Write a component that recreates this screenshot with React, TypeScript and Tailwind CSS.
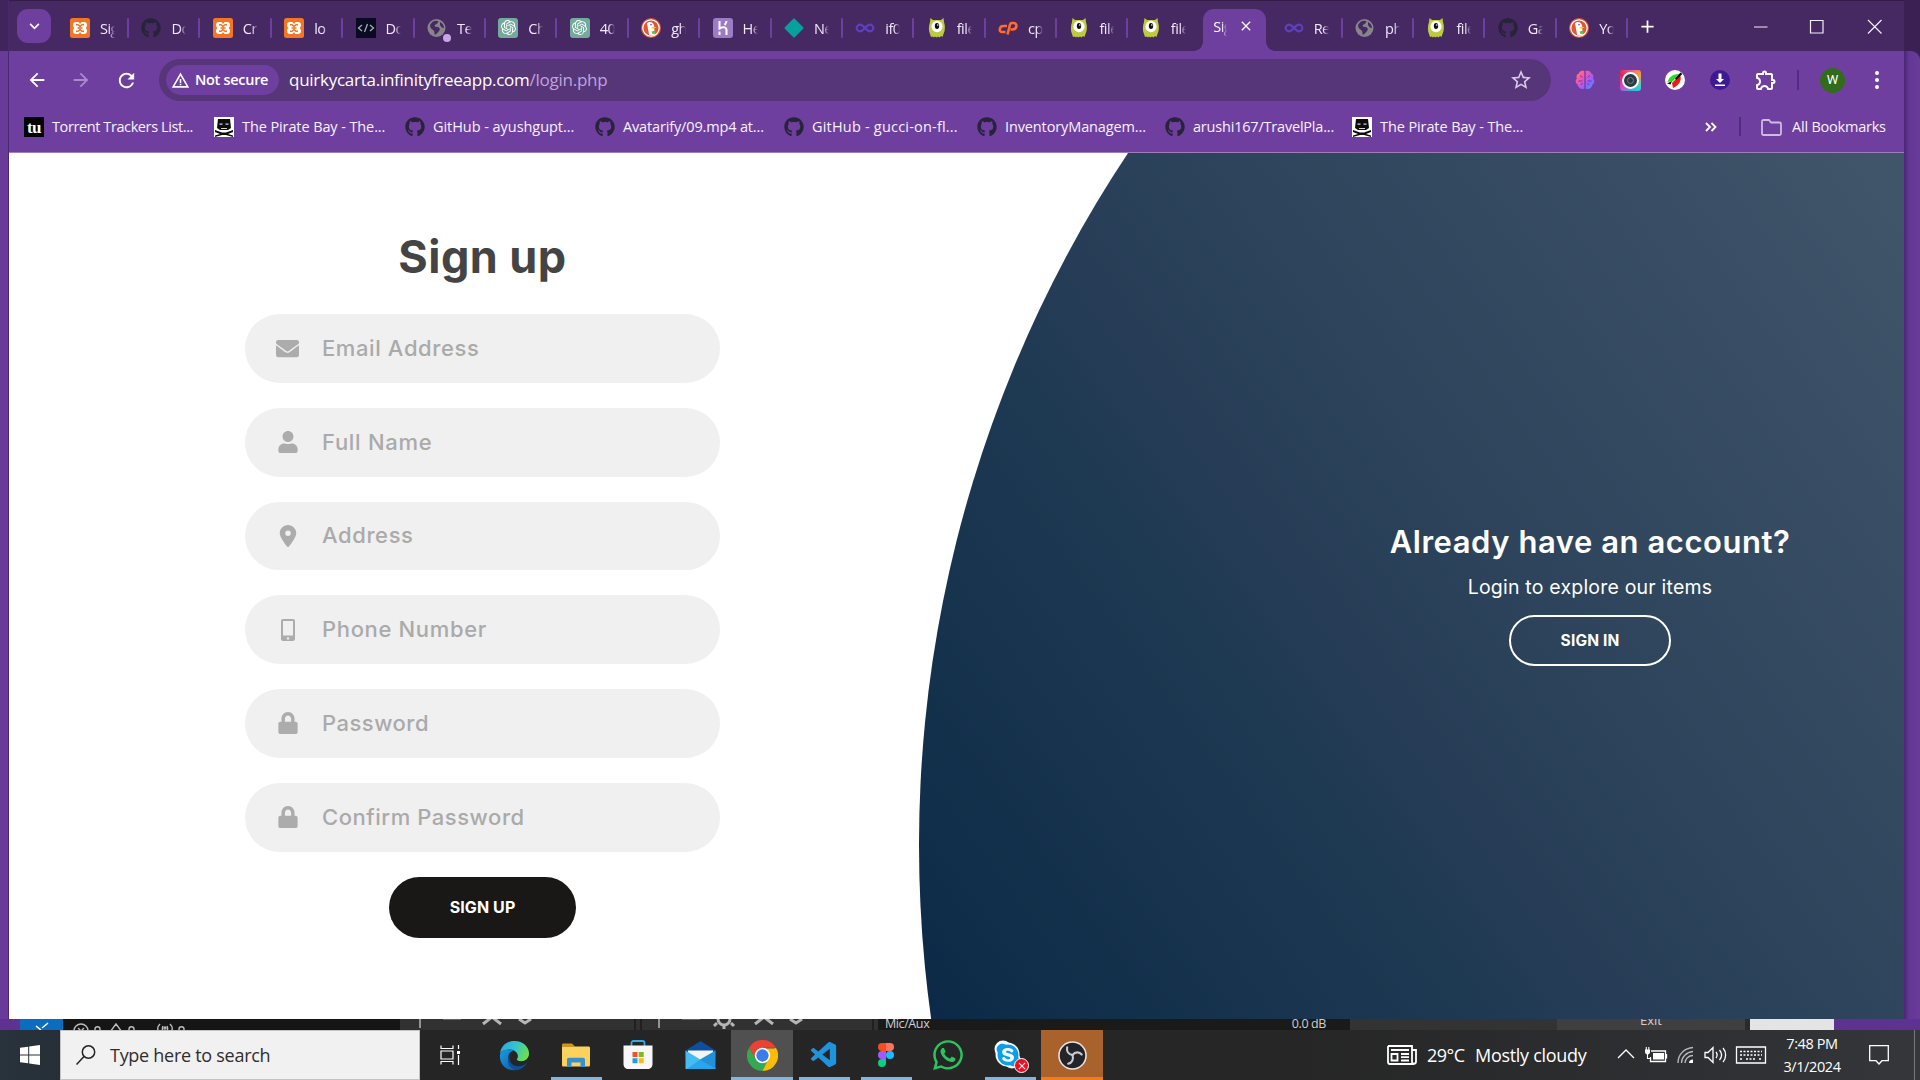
import type { ReactNode } from "react";
import { FaGithub, FaEnvelope, FaUser, FaLock, FaWhatsapp, FaSkype } from "react-icons/fa";
import { FaLocationDot } from "react-icons/fa6";
import { SiOpenai } from "react-icons/si";
import { VscVscode } from "react-icons/vsc";
import {
  MdArrowBack,
  MdArrowForward,
  MdRefresh,
  MdStarBorder,
  MdOutlineExtension,
  MdWarningAmber,
  MdAdd,
  MdClose,
} from "react-icons/md";
import { Infinity as InfinityIcon } from "lucide-react";

/* ---------- favicons ---------- */

const Xampp = () => (
  <svg viewBox="0 0 20 20" className="size-5">
    <rect width="20" height="20" rx="2.500" fill="#f37623" />
    <path
      d="M6 4h2.500L10 6l1.500-2H14c2 0 3 1.200 3 3 0 1.300-.6 2.200-1.500 3 .9.800 1.500 1.700 1.500 3 0 1.800-1 3-3 3h-2.500L10 14l-1.500 2H6c-2 0-3-1.200-3-3 0-1.300.6-2.200 1.500-3C3.600 9.200 3 8.300 3 7c0-1.800 1-3 3-3z"
      fill="#fff"
    />
    <path
      d="M6 6.800h2l2 1.700 2-1.700h2M6 13.200h2l2-1.700 2 1.700h2M7.500 10h5"
      fill="none"
      stroke="#f37623"
      strokeWidth="1.500"
    />
  </svg>
);
const Github = () => <FaGithub size={20} className="shrink-0 text-[#272338]" />;
const Code = () => (
  <span className="flex size-5 items-center justify-center bg-[#0a0b22]">
    <svg viewBox="0 0 18 10" className="h-[10px] w-[18px]" fill="none" stroke="#9fb0b0" strokeWidth="1.300">
      <path d="M5 2L1.500 5 5 8M13 2l3.500 3L13 8M10.500 1L7.500 9" />
    </svg>
  </span>
);
const Globe = ({ dot = false }: { dot?: boolean }) => (
  <span className="relative flex size-5 items-center justify-center">
    <svg viewBox="0 0 20 20" className="size-5">
      <circle cx="9.5" cy="10" r="9" fill="#86868a" />
      <path
        d="M3 7c2-4 5-5 8-4 1 1-1 3-3 4-1 1 0 2 2 2s4 2 2 4c-1 1-2 3-4 4-1-2 0-4-2-5S3 9 3 7zM13 4c2 1 4 3 4 6-2 0-3-1-4-3z"
        fill="#462863"
      />
    </svg>
    {dot && <span className="absolute -right-1 -bottom-1 size-2 rounded-full bg-[#c9a5e6]" />}
  </span>
);
const Gpt = () => (
  <span className="flex size-5 items-center justify-center rounded-[3px] bg-[#74aa9c] text-white">
    <SiOpenai size={15} />
  </span>
);
const Duck = () => (
  <svg viewBox="0 0 20 20" className="size-5">
    <circle cx="10" cy="10" r="10" fill="#de5833" />
    <circle cx="10" cy="10" r="8.200" fill="#de5833" stroke="#fff" strokeWidth="1.200" />
    <path d="M6 5.200c2.400-2.400 6.800-.8 7 2.600l.8 8.600c-1.800 1-4 1-5.700.3z" fill="#fff" />
    <path d="M10.500 9.200c2-.8 4-.6 5 0-1 1-3 1-4.800 1.600z" fill="#fdd20a" />
    <path d="M10.500 13.500l4-1v3l-3 .5z" fill="#65bc46" />
    <circle cx="10" cy="6.800" r=".8" fill="#2d4f8e" />
  </svg>
);
const Heroku = () => (
  <span className="flex size-5 items-center justify-center rounded-[3px] bg-[#9c7cc4] text-white">
    <svg viewBox="0 0 20 20" className="size-5" fill="none" stroke="#fff" strokeWidth="2">
      <path d="M6.500 3v7.500c4-2 7-1.500 7 1.500V17M13.500 3c0 1.700-.8 2.800-1.800 4M6.500 13.500V17" />
    </svg>
  </span>
);
const Diamond = () => (
  <span className="flex size-5 items-center justify-center">
    <span className="size-[14px] rotate-45 rounded-[1px] bg-[#06a19b]" />
  </span>
);
const Loop = () => <InfinityIcon size={20} strokeWidth={2.6} className="text-[#5e3fc0]" />;
const Monster = () => (
  <svg viewBox="0 0 20 20" className="size-5">
    <path
      d="M3.500 0l2.500 2h8l2.500-2 .5 4c1.500 4 1 9-.5 12l-1 3-1.500-1-1.500 1.500-1.500-1-1.500 1-1.500-1L7 19.500 5.500 18.500 4 19l-1-3c-1.500-3-1.500-8 0-12z"
      fill="#bccb3f"
    />
    <ellipse cx="10" cy="8.500" rx="5.600" ry="5.800" fill="#fff" />
    <ellipse cx="10" cy="8" rx="2.200" ry="3" fill="#111" />
    <circle cx="10.800" cy="7" r=".8" fill="#fff" />
  </svg>
);
const Cpanel = () => (
  <svg viewBox="0 0 20 20" className="size-5" fill="none" stroke="#ff6c2c" strokeWidth="2.600">
    <path d="M9 8H5.500C3.500 8 2 9.500 1.800 11.300 1.600 13 2.500 14 4 14h3.500" />
    <path d="M9.500 16.500L12 6.500c.3-1 .8-1.500 1.800-1.500h1.700c2 0 3.200 1.500 2.900 3.300-.3 2-1.900 3.200-3.900 3.200h-2" />
  </svg>
);

const Pirate = () => (
  <svg viewBox="0 0 20 20" className="size-5 shrink-0">
    <rect width="20" height="20" fill="#fff" />
    <path d="M4 2h12l1 9-3 2H6l-3-2z" fill="#0c0c0c" />
    <path
      d="M1 13l7 2.500h4L19 13v2l-5 2 5 1.500V20l-7-2H8l-7 2v-1.500L6 17l-5-2z"
      fill="#0c0c0c"
    />
    <path d="M5.500 6.500h3v1.200h-3zM11.500 6.500h3v1.200h-3zM7 11h6v1H7z" fill="#d5d5d5" />
  </svg>
);
const Tu = () => (
  <span className="flex size-5 shrink-0 items-center justify-center bg-black font-['Liberation_Serif',serif] text-[17px] leading-none font-bold tracking-[-0.5px] text-white">
    tu
  </span>
);

/* ---------- tab strip ---------- */

type TabItem = { title: string; icon: ReactNode };

const leftTabs: TabItem[] = [
  { title: "Sig", icon: <Xampp /> },
  { title: "Do", icon: <Github /> },
  { title: "Cr", icon: <Xampp /> },
  { title: "lo", icon: <Xampp /> },
  { title: "Do", icon: <Code /> },
  { title: "Te", icon: <Globe dot /> },
  { title: "Ch", icon: <Gpt /> },
  { title: "40", icon: <Gpt /> },
  { title: "gh", icon: <Duck /> },
  { title: "He", icon: <Heroku /> },
  { title: "Ne", icon: <Diamond /> },
  { title: "if0", icon: <Loop /> },
  { title: "file", icon: <Monster /> },
  { title: "cp", icon: <Cpanel /> },
  { title: "file", icon: <Monster /> },
  { title: "file", icon: <Monster /> },
];
const rightTabs: TabItem[] = [
  { title: "Re", icon: <Loop /> },
  { title: "ph", icon: <Globe /> },
  { title: "file", icon: <Monster /> },
  { title: "Ga", icon: <Github /> },
  { title: "Yo", icon: <Duck /> },
];

const Tab = ({ title, icon, last = false }: TabItem & { last?: boolean }) => (
  <div className="flex h-full w-[71.400px] shrink-0 items-center pt-[3px] pl-[12px]">
    {icon}
    <span className="mt-[2px] ml-[10px] w-[15px] overflow-hidden [mask-image:linear-gradient(to_right,#000_60%,transparent)] text-[14.500px] tracking-[-0.500px] whitespace-nowrap text-[#f1e9fa]">
      {title}
    </span>
    {!last && <span className="ml-[12px] h-5 w-[2px] shrink-0 rounded-full bg-[#6f3fa0]" />}
  </div>
);

const TabStrip = () => (
  <div className="flex h-[51px] items-center border-t border-[#331c4a] bg-[#462863]">
    <button className="ml-2 flex size-[34px] items-center justify-center rounded-[11px] bg-[#6f3fa0]">
      <svg viewBox="0 0 12 8" className="h-[7px] w-[11px]" fill="none" stroke="#fff" strokeWidth="2">
        <path d="M1 1l5 5 5-5" />
      </svg>
    </button>
    <div className="ml-[7px] flex h-full">
      {leftTabs.map((t, i) => (
        <Tab key={i} {...t} last={i === leftTabs.length - 1} />
      ))}
      <div className="flex h-full w-[71.400px] items-end">
        <span className="-ml-[6px] size-[9px] shrink-0 bg-[radial-gradient(circle_at_0_0,transparent_8.500px,#6f3fa0_9px)]" />
        <div className="flex h-[42px] w-[63px] shrink-0 items-center rounded-t-[11px] bg-[#6f3fa0] pb-[6px] pl-[10px]">
          <span className="w-[14px] overflow-hidden [mask-image:linear-gradient(to_right,#000_60%,transparent)] text-[14.500px] tracking-[-0.500px] whitespace-nowrap text-white">
            Sig
          </span>
          <MdClose size={16} className="-mt-[2px] ml-[11px] text-white" />
        </div>
        <span className="size-[9px] shrink-0 bg-[radial-gradient(circle_at_100%_0,transparent_8.500px,#6f3fa0_9px)]" />
      </div>
      {rightTabs.map((t, i) => (
        <Tab key={i} {...t} />
      ))}
    </div>
    <MdAdd size={21} className="ml-[8px] text-white" />
    <svg
      viewBox="0 0 130 16"
      className="mt-[1px] ml-[96px] h-4 w-[130px]"
      fill="none"
      stroke="#f3edf9"
      strokeWidth="1.200"
    >
      <path d="M0 8h13.500M56.500 1.500h12.500v12.500H56.500zM114 1l13.500 13.500M127.500 1L114 14.500" />
    </svg>
  </div>
);

/* ---------- toolbar ---------- */

const Toolbar = () => (
  <div className="flex h-[58px] items-center bg-[#6f3fa0] text-white">
    <MdArrowBack size={22} className="ml-[17px]" />
    <MdArrowForward size={22} className="ml-[22px] text-[#a98bca]" />
    <MdRefresh size={23} className="ml-[23px]" />
    <div className="ml-[21px] flex h-[42px] w-[1392px] items-center rounded-full bg-[#563579] pl-[7px]">
      <div className="flex h-[30px] w-[113px] items-center rounded-full bg-[#6f3fa0] pl-[5px]">
        <MdWarningAmber size={19} />
        <span className="ml-[5px] text-[14.500px] font-semibold tracking-[-0.300px] whitespace-nowrap">
          Not secure
        </span>
      </div>
      <span className="ml-[10px] text-[17px] tracking-[-0.260px] whitespace-nowrap">
        quirkycarta.infinityfreeapp.com<span className="text-[#bfa3dc]">/login.php</span>
      </span>
      <MdStarBorder size={24} className="mr-[18px] ml-auto text-[#d9cbe8]" />
    </div>
    <div className="ml-[24px] flex items-center gap-[24.500px]">
      <svg viewBox="0 0 20 20" className="size-5">
        <defs>
          <linearGradient id="brain" x1="0" y1="0" x2="1" y2="1">
            <stop offset="0" stopColor="#ff8a3c" />
            <stop offset=".35" stopColor="#f255b8" />
            <stop offset=".7" stopColor="#8a62ff" />
            <stop offset="1" stopColor="#2fa8ff" />
          </linearGradient>
        </defs>
        <path
          d="M9.300 1C6 0 4 2 4 3.500 1.500 4 1 7 2 8.500 0 10 .5 13.500 2.500 14.500 3 18 7 20 9.300 18.500zM10.700 1C14 0 16 2 16 3.500c2.500.5 3 3.500 2 5 2 1.500 1.500 5-.5 6-.5 3.500-4.500 5.500-6.800 4z"
          fill="url(#brain)"
        />
        <path
          d="M5 5.500l2.500 2M3.500 11h4M6 15l1.500-2M15 5.500l-2.500 2M16.500 11h-4M14 15l-1.500-2"
          stroke="#6f3fa0"
          fill="none"
        />
      </svg>
      <span className="flex size-[21px] items-center justify-center rounded-[3px] bg-[conic-gradient(from_0deg,#f5588a,#f0a040,#40d0c0,#30b0f0,#e040c0,#e82050,#f5588a)]">
        <span className="size-[17px] rounded-full border-2 border-white bg-[#2b3a44] p-[3px]">
          <span className="block size-full rounded-full border border-[#6d8591]" />
        </span>
      </span>
      <svg viewBox="0 0 20 20" className="size-5">
        <circle cx="10" cy="10" r="10" fill="#fff" />
        <path d="M2.500 12C4 7 8 4 14 4l-6 7z" fill="#1fe01f" />
        <path d="M7 13l8-8c2 4 0 10-7 13z" fill="#f01818" />
        <path d="M2 13.500l5-2.500-1.500 3.500zM10 8.500l5.500-6 1.800 1.500-6 6z" fill="#0a0a0a" />
      </svg>
      <svg viewBox="0 0 20 20" className="size-5">
        <circle cx="10" cy="10" r="10" fill="#3d1a94" />
        <path d="M8.500 3.500h3V9H14l-4 4-4-4h2.500zM5 14.500h10V16H5z" fill="#fff" />
      </svg>
      <MdOutlineExtension size={24} />
    </div>
    <span className="ml-[19px] h-5 w-[2px] bg-[#522c80]" />
    <span className="ml-[21px] flex size-[25px] items-center justify-center rounded-full bg-[#336b1c] font-['Roboto',sans-serif] text-[13px]">
      W
    </span>
    <svg viewBox="0 0 4 18" className="ml-[30px] h-[18px] w-1" fill="#fff">
      <circle cx="2" cy="2" r="2" />
      <circle cx="2" cy="9" r="2" />
      <circle cx="2" cy="16" r="2" />
    </svg>
  </div>
);

/* ---------- bookmarks ---------- */

const bookmarks = [
  { label: "Torrent Trackers List...", icon: <Tu />, width: "w-[190px]", track: "tracking-[-0.400px]" },
  { label: "The Pirate Bay - The...", icon: <Pirate />, width: "w-[191px]", track: "tracking-[-0.100px]" },
  { label: "GitHub - ayushgupt...", icon: <Github />, width: "w-[190px]", track: "tracking-[-0.050px]" },
  { label: "Avatarify/09.mp4 at...", icon: <Github />, width: "w-[189px]", track: "tracking-[-0.150px]" },
  { label: "GitHub - gucci-on-fl...", icon: <Github />, width: "w-[193px]", track: "tracking-[0.200px]" },
  { label: "InventoryManagem...", icon: <Github />, width: "w-[188px]", track: "tracking-[-0.120px]" },
  { label: "arushi167/TravelPla...", icon: <Github />, width: "w-[187px]", track: "tracking-[-0.200px]" },
  { label: "The Pirate Bay - The...", icon: <Pirate />, width: "w-[190px]", track: "tracking-[-0.100px]" },
];

const BookmarksBar = () => (
  <div className="flex h-[44px] items-start border-b border-[#9a7fb8] bg-[#6f3fa0] pt-[8px] pl-[15px] text-[14.500px] leading-5 whitespace-nowrap text-[#f7f2fc]">
    {bookmarks.map((b, i) => (
      <div key={i} className={`flex gap-2 ${b.width}`}>
        {b.icon}
        <span className={b.track}>{b.label}</span>
      </div>
    ))}
    <svg
      viewBox="0 0 12 10"
      className="mt-[5px] ml-[163px] h-[10px] w-3"
      fill="none"
      stroke="#fff"
      strokeWidth="1.800"
    >
      <path d="M1 1l4 4-4 4M6.500 1l4 4-4 4" />
    </svg>
    <span className="ml-[22px] h-[19px] w-[2px] bg-[#522c80]" />
    <svg
      viewBox="0 0 21 17"
      className="mt-[2px] ml-[20px] h-[17px] w-[21px]"
      fill="none"
      stroke="#cdbbe0"
      strokeWidth="1.800"
    >
      <path d="M1 2.500C1 1.500 1.500 1 2.500 1H8l2 2.500h8.500c1 0 1.500.5 1.500 1.500v9.500c0 1-.5 1.500-1.500 1.500h-16C1.500 16 1 15.500 1 14.500z" />
    </svg>
    <span className="ml-[10px] tracking-[-0.220px]">All Bookmarks</span>
  </div>
);

/* ---------- page ---------- */

const PhoneIcon = () => (
  <svg viewBox="0 0 14 22" className="h-[22px] w-[14px]">
    <path
      fillRule="evenodd"
      fill="#acacac"
      d="M2 0h10c1.200 0 2 .8 2 2v18c0 1.200-.8 2-2 2H2c-1.200 0-2-.8-2-2V2C0 .8.800 0 2 0zM2 2v14.500h10V2zM7 18.200a1.200 1.200 0 100 2.400 1.200 1.200 0 000-2.400z"
    />
  </svg>
);

const Field = ({ icon, label, track }: { icon: ReactNode; label: string; track: string }) => (
  <div className="flex h-[68.750px] w-[475px] items-center rounded-full bg-[#f0f0f0]">
    <span className="flex w-[77px] justify-center pl-[8px] text-[#acacac]">{icon}</span>
    <span className={`text-[22px] font-medium whitespace-nowrap text-[#aaa] ${track}`}>{label}</span>
  </div>
);

const SignUpPage = () => (
  <div className="relative flex h-[866px] overflow-hidden bg-white font-['Inter',sans-serif]">
    <div className="absolute -top-[558px] left-[910px] size-[2500px] rounded-full bg-[linear-gradient(54deg,#0c2a47_18.500%,#1e3952_31%,#273d57_34.500%,#2c435b_39%,#42566b_56%)]" />
    <form className="ml-[236px] flex w-[475px] flex-col items-center pt-[75px]">
      <h2 className="mb-[21px] h-[65px] text-[45px] leading-[57px] font-bold tracking-[0.450px] whitespace-nowrap text-[#444]">
        Sign up
      </h2>
      <div className="flex flex-col gap-[25px]">
        <Field icon={<FaEnvelope size={23} />} label="Email Address" track="tracking-[0.600px]" />
        <Field icon={<FaUser size={22} />} label="Full Name" track="tracking-[0.700px]" />
        <Field icon={<FaLocationDot size={22} />} label="Address" track="tracking-[0.600px]" />
        <Field icon={<PhoneIcon />} label="Phone Number" track="tracking-[0.650px]" />
        <Field icon={<FaLock size={22} />} label="Password" track="tracking-[0.500px]" />
        <Field icon={<FaLock size={22} />} label="Confirm Password" track="tracking-[0.550px]" />
      </div>
      <button className="mt-[25px] h-[61px] w-[187px] rounded-full bg-[#191816] text-[16px] font-bold tracking-[0.100px] text-white">
        SIGN UP
      </button>
    </form>
    <div className="relative mt-[367px] ml-[669px] flex w-[402px] flex-col items-center text-white">
      <h3 className="h-[44px] text-[31px] leading-[44px] font-semibold tracking-[0.550px] whitespace-nowrap">
        Already have an account?
      </h3>
      <p className="mt-[8px] h-[30px] text-[19.500px] leading-[30px] tracking-[0.200px] whitespace-nowrap">
        Login to explore our items
      </p>
      <button className="mt-[13px] h-[51px] w-[162px] rounded-full border-2 border-white text-[15.500px] font-bold tracking-[0.150px]">
        SIGN IN
      </button>
    </div>
  </div>
);

/* ---------- strip of windows behind the browser ---------- */

const BackgroundStrip = () => (
  <div className="flex h-[11px] overflow-hidden text-[#cfcfcf]">
    <div className="w-5 bg-[#5f3191]" />
    <div className="w-[43px] bg-[#0b6dc0]">
      <svg viewBox="0 0 43 11" className="h-[11px] w-[43px]" fill="none" stroke="#fff" strokeWidth="1.500">
        <path d="M16 7l5 4M28 4l-6 5" />
      </svg>
    </div>
    <div className="w-[337px] bg-[#151515]">
      <svg viewBox="0 0 337 11" className="h-[11px] w-[337px]" fill="none" stroke="#bdbdbd" strokeWidth="1.400">
        <circle cx="18" cy="12" r="7" />
        <path d="M15 9l6 6M21 9l-6 6M47 13l6-8 6 8" />
        <path d="M97 5c-3 3-3 6 0 9M100 7c-1 2-1 3 0 5M107 5c3 3 3 6 0 9M104 7c1 2 1 3 0 5" />
        <circle cx="102" cy="9" r="1" />
        <path d="M32 13V10c0-3 5-3 5 0v3M66 13V10c0-3 5-3 5 0v3M116 13V10c0-3 5-3 5 0v3" />
      </svg>
    </div>
    <div className="w-[478px] bg-[#313131]">
      <svg viewBox="0 0 478 11" className="h-[11px] w-[478px]" fill="none" stroke="#b5b5b5" strokeWidth="3">
        <path d="M20 0v9M259 0v9" strokeWidth="1.500" />
        <path d="M43 0h18M282 0h18" stroke="#777" strokeWidth="1.500" />
        <path d="M83 5l9-7 9 7M119 0l6 4 6-4M355 5l9-7 9 7M390 0l6 4 6-4" />
        <circle cx="324" cy="0" r="6" />
        <path d="M324 6v4M317 4l-3 3M331 4l3 3" />
        <path d="M235 0v11M241 0v11M473 0v11" stroke="#1b1b1b" strokeWidth="1.500" />
      </svg>
    </div>
    <div className="flex w-[472px] bg-[#1a1a1a] pr-[24px] pl-[7px] text-[12.500px] leading-[10px]">
      <span className="tracking-[-0.400px]">Mic/Aux</span>
      <span className="ml-auto tracking-[-0.400px]">0.0 dB</span>
    </div>
    <div className="w-[207px] bg-[#333]" />
    <div className="flex w-[188px] justify-center bg-[#3f3f3f] text-[13px] leading-[3px]">Exit</div>
    <div className="w-[5px] bg-[#2a2a2a]" />
    <div className="w-[84px] bg-[#e4e4e4]" />
    <div className="flex-1 bg-[#5f3191]" />
  </div>
);

/* ---------- taskbar ---------- */

const EdgeIcon = () => (
  <svg viewBox="0 0 32 32" className="size-[31px]">
    <defs>
      <linearGradient id="edgeTop" x1="0" y1=".2" x2="1" y2=".5">
        <stop offset="0" stopColor="#2aa7e0" />
        <stop offset=".5" stopColor="#35c3d0" />
        <stop offset="1" stopColor="#6be04a" />
      </linearGradient>
      <linearGradient id="edgeBase" x1="0" y1="0" x2="1" y2="1">
        <stop offset="0" stopColor="#1b9de2" />
        <stop offset="1" stopColor="#0c59a4" />
      </linearGradient>
    </defs>
    <path
      d="M1 14C2 6 8 1 16 1c9 0 15 6 15 13 0 5-4 8-8 8-3 0-5-1-4.500-2.500C21 17 19 11 13 10 8 9.500 3 11 1 14z"
      fill="url(#edgeTop)"
    />
    <path d="M1 15c2-5 10-6.500 14-4-4 1-6 5-5.500 9C10 26 14 30 19 31 9 33 0 26 1 15z" fill="url(#edgeBase)" />
    <path
      d="M12.500 14.500C9 18 11 27 20 27c4 0 7-1.500 9-3.500-2 4-6 7-10.500 7.500C8 30 7 18 12.500 14.500z"
      fill="#0e4f9c"
    />
  </svg>
);
const ExplorerIcon = () => (
  <svg viewBox="0 0 28 24" className="h-6 w-7">
    <path d="M0 2C0 1 .5.500 1.500.5H10l3 3H0z" fill="#d9940e" />
    <path d="M0 3.500h26.500c.8 0 1.500.5 1.500 1.500v17c0 1-.7 1.500-1.500 1.500h-25C.5 23.500 0 23 0 22z" fill="#fbd25c" />
    <path
      d="M5 24v-7.500c0-1 .8-1.800 1.800-1.800h14.400c1 0 1.800.8 1.800 1.800V24h-4.500v-4.500h-9V24z"
      fill="#3a8fd0"
    />
  </svg>
);
const StoreIcon = () => (
  <svg viewBox="0 0 30 30" className="size-[30px]">
    <path d="M8.500 6V3c0-1.200.8-2 2-2h9c1.200 0 2 .8 2 2v3" fill="none" stroke="#35a9e2" strokeWidth="1.800" />
    <path d="M.5 5.500h29V24c0 3-2 5-5 5h-19c-3 0-5-2-5-5z" fill="#f7f7f7" />
    <path d="M9.500 12h5v5h-5z" fill="#f0502c" />
    <path d="M15.700 12h5v5h-5z" fill="#7fba1c" />
    <path d="M9.500 18.200h5v5h-5z" fill="#1c9fe6" />
    <path d="M15.700 18.200h5v5h-5z" fill="#fcb91c" />
  </svg>
);
const MailIcon = () => (
  <svg viewBox="0 0 31 30" className="h-[30px] w-[31px]">
    <path d="M.5 10.500L15.500 1l15 9.500V18H.5z" fill="#0d4f9e" />
    <path d="M3 10.500h25V20H3z" fill="#f3f5f7" />
    <path d="M.5 10.500L31 29H.5z" fill="#46bdf2" />
    <path d="M30.500 10.500L15 19.500l15.500 9.500z" fill="#2390dc" />
    <path d="M15 19.500L31 29H2z" fill="#2aa4ea" />
  </svg>
);
const ChromeIcon = () => (
  <svg viewBox="0 0 48 48" className="size-[31px]">
    <path d="M24 24L44.800 12A24 24 0 0124 48z" fill="#fbbc05" />
    <path d="M24 13h20.800L34 30z" fill="#fbbc05" />
    <path d="M24 12h20.800A24 24 0 003.200 12l10.800 18z" fill="#ea4335" />
    <path d="M33.500 29.500L24 48A24 24 0 013.200 12l11 18z" fill="#34a853" />
    <circle cx="24" cy="24" r="12" fill="#fff" />
    <circle cx="24" cy="24" r="9.500" fill="#3b7ded" />
  </svg>
);
const FigmaIcon = () => (
  <svg viewBox="0 0 16 24" className="h-[24px] w-4">
    <path d="M8 0H4a4 4 0 000 8h4z" fill="#f24e1e" />
    <path d="M8 0h4a4 4 0 010 8H8z" fill="#ff7262" />
    <path d="M8 8H4a4 4 0 000 8h4z" fill="#a259ff" />
    <circle cx="12" cy="12" r="4" fill="#1abcfe" />
    <path d="M8 16H4a4 4 0 104 4z" fill="#0acf83" />
  </svg>
);
const SkypeIcon = () => (
  <span className="relative flex size-[30px] -translate-x-[2px] items-center justify-center">
    <svg viewBox="0 0 30 30" className="absolute inset-0 size-[30px]">
      <circle cx="10" cy="9" r="8.500" fill="#f4fbff" />
      <circle cx="19" cy="20" r="8.500" fill="#f4fbff" />
      <circle cx="14.500" cy="14.500" r="12" fill="#f4fbff" />
    </svg>
    <FaSkype size={26} className="relative text-[#0b9fe8]" />
    <span className="absolute -right-[6px] -bottom-[3px] flex size-[15px] items-center justify-center rounded-full border border-white bg-[#e81123] text-white">
      <MdClose size={12} />
    </span>
  </span>
);
const ObsIcon = () => (
  <svg viewBox="0 0 30 30" className="size-[29px]">
    <circle cx="15" cy="15" r="14" fill="#23242a" stroke="#ece5df" strokeWidth="1.600" />
    <g fill="none" stroke="#c9c9cf" strokeWidth="2.200" strokeLinecap="round">
      <path d="M15 14.500c-4.500-1-6.500-4-5.500-8" />
      <path d="M15 14.500c3-3.500 7-3.500 9.500-.5" />
      <path d="M15 14.500c1.500 4.500-.5 8-4.500 9" />
    </g>
  </svg>
);

const TaskButton = ({ children, bar = "", bg = "" }: { children: ReactNode; bar?: string; bg?: string }) => (
  <div className={`flex h-[50px] w-[62px] shrink-0 flex-col items-center ${bg}`}>
    <span className="flex h-[47px] items-center justify-center pt-[3px]">{children}</span>
    <span className={`h-[3px] ${bar}`} />
  </div>
);

const Taskbar = () => (
  <div className="flex h-[50px] items-center bg-[linear-gradient(to_right,#29333c_0,#262f38_60px,#252525_420px,#262626_1300px,#303236_1800px,#36373b_1920px)] text-white">
    <div className="flex w-[60px] justify-center">
      <svg viewBox="0 0 20 20" className="size-5" fill="#fff">
        <path d="M0 2.800L8.200 1.700v7.800H0zM9.200 1.500L20 0v9.500H9.200zM0 10.500h8.200v7.800L0 17.200zM9.200 10.500H20V20L9.200 18.500z" />
      </svg>
    </div>
    <div className="flex h-[50px] w-[360px] items-center border border-[#c4c4c4] bg-[#f1f1f1] pl-[15px] text-[#2e2e2e]">
      <svg viewBox="0 0 20 20" className="size-[20px]" fill="none" stroke="#222" strokeWidth="1.500">
        <circle cx="12.500" cy="7" r="6.200" />
        <path d="M8 11.500L0.500 19.500" />
      </svg>
      <span className="ml-[14px] text-[18px] tracking-[-0.280px] whitespace-nowrap">Type here to search</span>
    </div>
    <svg
      viewBox="0 0 22 20"
      className="mr-[21px] ml-[20px] h-5 w-[22px]"
      fill="none"
      stroke="#fff"
      strokeWidth="1.200"
    >
      <path d="M1 .500v3h12v-3M1 19.500v-3h12v3M1 6h12v8H1zM18.500 0v4M18.500 10v10" />
      <path d="M17 6h3v3h-3z" fill="#fff" stroke="none" />
    </svg>
    <TaskButton><EdgeIcon /></TaskButton>
    <TaskButton bar="w-[51px] bg-[#82b6de]"><ExplorerIcon /></TaskButton>
    <TaskButton><StoreIcon /></TaskButton>
    <TaskButton><MailIcon /></TaskButton>
    <TaskButton bar="w-[62px] bg-[#82b6de]" bg="bg-[#505050]"><ChromeIcon /></TaskButton>
    <TaskButton bar="w-[51px] bg-[#82b6de]"><VscVscode size={31} className="text-[#1f93dc]" /></TaskButton>
    <TaskButton bar="w-[51px] bg-[#82b6de]"><FigmaIcon /></TaskButton>
    <TaskButton><FaWhatsapp size={34} className="text-[#2bc45f]" /></TaskButton>
    <TaskButton bar="w-[51px] bg-[#82b6de]"><SkypeIcon /></TaskButton>
    <TaskButton bar="w-[62px] bg-[#f57c14]" bg="bg-[#a9622b]"><ObsIcon /></TaskButton>

    <svg
      viewBox="0 0 30 20"
      className="ml-[284px] h-5 w-[30px]"
      fill="none"
      stroke="#fff"
      strokeWidth="1.800"
    >
      <path d="M1 1h24v15.500c0 3 4 3 4 0V5h-4M1 1v16c0 1.300.7 2 2 2h24M4 5h18M4.500 9h6v6.500h-6zM14 9h8M14 12.200h8M14 15.500h8" />
    </svg>
    <span className="ml-[10px] w-[48px] text-[18px] tracking-[-0.500px]">29°C</span>
    <span className="w-[142px] text-[18px] tracking-[-0.300px] whitespace-nowrap">Mostly cloudy</span>
    <svg viewBox="0 0 150 24" className="h-6 w-[150px] shrink-0" fill="none" stroke="#fff" strokeWidth="1.300">
      <path d="M1 15l8-8 8 8" />
      <path d="M36 10h11v6.500H36z" fill="#fff" stroke="none" />
      <path d="M34 8h14.500v10.500H33.500V14M49.500 11v4.500" />
      <path d="M28 6.500h5V9c0 1.600-1 2.500-2.500 2.500S28 10.600 28 9z" fill="#fff" stroke="none" />
      <path d="M29.300 4v3M31.800 4v3M30.500 11v4.500h3" strokeWidth="1.100" />
      <g stroke="#b9b9b9">
        <path d="M61 20C61 11 68 5 76 4.500M64.500 20c0-6 5-11 11.500-11.500M68 20c0-4 3.500-7.500 8-7.500" />
      </g>
      <path d="M72 20c0-2 1.500-3.500 4-3.500V20z" fill="#fff" stroke="none" />
      <path d="M88 9.500h3l5-5v15l-5-5h-3zM99 9c1.500 2 1.500 4 0 6M102.500 7c2.500 3 2.500 7 0 10M106 5c3.500 4 3.500 10 0 14" />
      <path d="M119.500 4h29v16h-29z" />
      <path d="M123 8.500h22M123 12h22M123 16h3M129 16h10M142 16h3" strokeDasharray="2 1.500" />
    </svg>
    <div className="ml-[16px] flex w-[58px] flex-col items-center text-[14.500px] leading-[23px] tracking-[-0.400px] whitespace-nowrap">
      <span>7:48 PM</span>
      <span>3/1/2024</span>
    </div>
    <svg viewBox="0 0 20 20" className="ml-[28px] h-5 w-5" fill="none" stroke="#fff" strokeWidth="1.300">
      <path d="M.7.700h18.600v15H13L10 19l-3-3.300H.7z" />
    </svg>
    <span className="ml-auto h-[50px] w-[6px] border-l border-[#77787b]" />
  </div>
);

export default function App() {
  return (
    <div className="flex h-[1080px] w-[1920px] flex-col overflow-hidden bg-[#5f3191] font-['Open_Sans','Noto_Sans',sans-serif]">
      <div className="flex h-[1019px]">
        <div className="w-[9px] border-r border-[#4a2870] bg-[linear-gradient(#40245c_0,#40245c_51px,#693b99_51px,#693b99_100%)]" />
        <div className="w-[1895px]">
          <TabStrip />
          <Toolbar />
          <BookmarksBar />
          <SignUpPage />
        </div>
        <div className="flex w-4 flex-col bg-[#3b2053] pt-[51px]">
          <div className="flex-1 rounded-tr-[9px] bg-[linear-gradient(to_right,#4a2673,#633796_5px,#693b99)]" />
        </div>
      </div>
      <BackgroundStrip />
      <Taskbar />
    </div>
  );
}
